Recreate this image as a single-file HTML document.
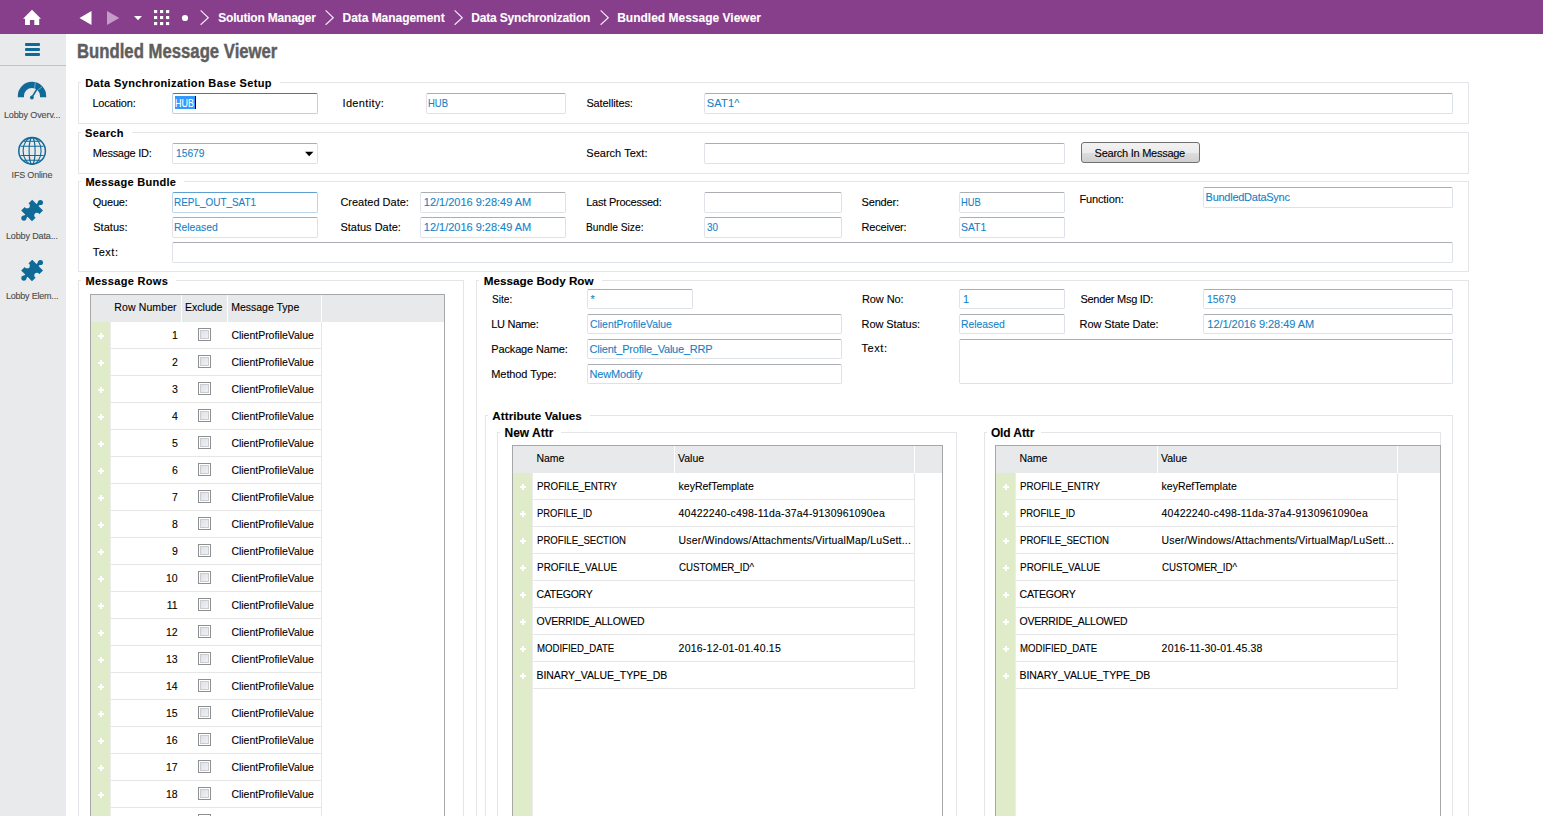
<!DOCTYPE html>
<html><head><meta charset="utf-8"><title>Bundled Message Viewer</title>
<style>
html,body{margin:0;padding:0;width:1543px;height:816px;overflow:hidden;background:#fff;font-family:"Liberation Sans",sans-serif}
.b,.t{position:absolute;box-sizing:content-box}
.t{white-space:pre;-webkit-text-stroke:0.1px currentColor}
.cb{width:11px;height:11px;border:1px solid #8e8f8f;background:linear-gradient(135deg,#d9dce2,#f6f6f7);box-shadow:inset 0 0 0 1px #fff,inset 0 0 0 2px #c9ccd3}
</style></head><body>
<div class="b" style="left:0px;top:0px;width:1543px;height:34px;background:#873e8b"></div>
<svg class="b" style="left:0;top:0" width="240" height="34" viewBox="0 0 240 34">
<path d="M32 9.8 L41 18.8 L39.2 18.8 L39.2 25 L34.3 25 L34.3 20 L29.9 20 L29.9 25 L25 25 L25 18.8 L23 18.8 Z" fill="#fff"/>
<path d="M79.5 18 L91.5 11 L91.5 25 Z" fill="#fff"/>
<path d="M107 11 L119.3 18 L107 25 Z" fill="#c59cc7"/>
<path d="M134 16 L142 16 L138 20.3 Z" fill="#fff"/>
<g fill="#fff">
<rect x="154" y="10" width="3.2" height="3.1"/><rect x="160" y="10" width="3.2" height="3.1"/><rect x="166" y="10" width="3.2" height="3.1"/>
<rect x="154" y="16" width="3.2" height="3.1"/><rect x="160" y="16" width="3.2" height="3.1"/><rect x="166" y="16" width="3.2" height="3.1"/>
<rect x="154" y="22" width="3.2" height="3.1"/><rect x="160" y="22" width="3.2" height="3.1"/><rect x="166" y="22" width="3.2" height="3.1"/>
</g>
<circle cx="185" cy="18" r="3.1" fill="#fff"/>
<path d="M200.6 10.4 L208.3 17.7 L200.6 24.8" fill="none" stroke="#f0e6f0" stroke-width="1.2"/>
</svg>
<svg class="b" style="left:324.8px;top:0" width="12" height="34" viewBox="0 0 12 34"><path d="M0.6 10.4 L8.3 17.7 L0.6 24.8" fill="none" stroke="#f0e6f0" stroke-width="1.2"/></svg>
<svg class="b" style="left:454.3px;top:0" width="12" height="34" viewBox="0 0 12 34"><path d="M0.6 10.4 L8.3 17.7 L0.6 24.8" fill="none" stroke="#f0e6f0" stroke-width="1.2"/></svg>
<svg class="b" style="left:599.8px;top:0" width="12" height="34" viewBox="0 0 12 34"><path d="M0.6 10.4 L8.3 17.7 L0.6 24.8" fill="none" stroke="#f0e6f0" stroke-width="1.2"/></svg>
<div class="t" style="left:218.20px;top:12.04px;font-size:12.00px;line-height:12.00px;color:#fff;font-weight:bold;letter-spacing:-0.197px">Solution Manager</div>
<div class="t" style="left:342.50px;top:12.04px;font-size:12.00px;line-height:12.00px;color:#fff;font-weight:bold;letter-spacing:-0.039px">Data Management</div>
<div class="t" style="left:471.30px;top:12.04px;font-size:12.00px;line-height:12.00px;color:#fff;font-weight:bold;letter-spacing:-0.187px">Data Synchronization</div>
<div class="t" style="left:617.20px;top:12.04px;font-size:12.00px;line-height:12.00px;color:#fff;font-weight:bold">Bundled Message Viewer</div>
<div class="b" style="left:0px;top:34px;width:66px;height:782px;background:#e9eaec"></div>
<div class="b" style="left:25px;top:43px;width:15px;height:3px;background:#0f6a98;border-radius:1px"></div>
<div class="b" style="left:25px;top:48px;width:15px;height:3px;background:#0f6a98;border-radius:1px"></div>
<div class="b" style="left:25px;top:53px;width:15px;height:3px;background:#0f6a98;border-radius:1px"></div>
<div class="b" style="left:0px;top:65px;width:66px;height:1px;background:#c2c3c5"></div>
<svg class="b" style="left:0;top:70" width="66" height="40" viewBox="0 70 66 40">
<path d="M17.8 97.2 L17.8 96 A14.2 14.2 0 0 1 46.2 96 L46.2 97.2 L40 97.2 L40 96 A8 8 0 0 0 24 96 L24 97.2 Z" fill="#0f6a98"/>
<path d="M35.4 82 L34.6 88" stroke="#7fb0cb" stroke-width="0.9"/>
<path d="M42 86.8 L38.3 89.8" stroke="#7fb0cb" stroke-width="0.9"/>
<path d="M31.9 97.4 L38.5 86.5" stroke="#0f6a98" stroke-width="1.6"/>
<circle cx="31.9" cy="97.5" r="1.9" fill="#0f6a98"/>
</svg>
<div class="t" style="left:3.90px;top:111.28px;font-size:9.00px;line-height:9.00px;color:#4a4a4a;letter-spacing:-0.104px">Lobby Overv...</div>
<svg class="b" style="left:0;top:130" width="66" height="40" viewBox="0 130 66 40">
<g fill="none" stroke="#0f6a98" stroke-width="1.1">
<circle cx="32.1" cy="150.9" r="13.3" stroke-width="1.5"/>
<ellipse cx="32.1" cy="150.9" rx="3" ry="13.3"/>
<ellipse cx="32.1" cy="150.9" rx="9" ry="13.3"/>
<path d="M20.5 146.2 L43.7 146.2 M20.5 155.5 L43.7 155.5 M23.5 141.2 L40.7 141.2 M23.5 160.3 L40.7 160.3"/>
</g></svg>
<div class="t" style="left:11.60px;top:171.28px;font-size:9.00px;line-height:9.00px;color:#4a4a4a;letter-spacing:-0.189px">IFS Online</div>
<svg class="b" style="left:0;top:195px" width="66" height="30" viewBox="0 195 66 30">
<path d="M32.2 199.8 L43 210.4 L32 221.2 L21.2 210.4 Z" fill="#0f6a98"/>
<circle cx="40.4" cy="202.5" r="2.6" fill="#0f6a98"/>
<path d="M36.5 206 L39.5 203.2" stroke="#0f6a98" stroke-width="3"/>
<circle cx="23.9" cy="218.1" r="2.6" fill="#0f6a98"/>
<path d="M27.5 214.6 L24.7 217.4" stroke="#0f6a98" stroke-width="3"/>
<circle cx="27.2" cy="205.7" r="2.6" fill="#e9eaec"/>
<circle cx="36.9" cy="215.3" r="2.6" fill="#e9eaec"/>
</svg>
<div class="t" style="left:5.90px;top:231.88px;font-size:9.00px;line-height:9.00px;color:#4a4a4a;letter-spacing:-0.125px">Lobby Data...</div>
<svg class="b" style="left:0;top:255px" width="66" height="30" viewBox="0 195 66 30">
<path d="M32.2 199.8 L43 210.4 L32 221.2 L21.2 210.4 Z" fill="#0f6a98"/>
<circle cx="40.4" cy="202.5" r="2.6" fill="#0f6a98"/>
<path d="M36.5 206 L39.5 203.2" stroke="#0f6a98" stroke-width="3"/>
<circle cx="23.9" cy="218.1" r="2.6" fill="#0f6a98"/>
<path d="M27.5 214.6 L24.7 217.4" stroke="#0f6a98" stroke-width="3"/>
<circle cx="27.2" cy="205.7" r="2.6" fill="#e9eaec"/>
<circle cx="36.9" cy="215.3" r="2.6" fill="#e9eaec"/>
</svg>
<div class="t" style="left:5.90px;top:291.88px;font-size:9.00px;line-height:9.00px;color:#4a4a4a;letter-spacing:-0.208px">Lobby Elem...</div>
<div class="t" style="left:77.40px;top:41.17px;font-size:20.00px;line-height:20.00px;color:#5e5e5e;transform-origin:0.00px 0;transform:scaleX(0.8359);font-weight:bold;-webkit-text-stroke:0.45px #5e5e5e">Bundled Message Viewer</div>
<div class="b" style="left:78px;top:82px;width:1px;height:42px;background:#e3e5e8"></div>
<div class="b" style="left:1468px;top:82px;width:1px;height:42px;background:#e3e5e8"></div>
<div class="b" style="left:78px;top:123px;width:1391px;height:1px;background:#e3e5e8"></div>
<div class="b" style="left:78px;top:82px;width:3px;height:1px;background:#e3e5e8"></div>
<div class="b" style="left:280px;top:82px;width:1189px;height:1px;background:#e3e5e8"></div>
<div class="t" style="left:85.30px;top:77.59px;font-size:11.00px;line-height:11.00px;color:#000;font-weight:bold;letter-spacing:0.360px">Data Synchronization Base Setup</div>
<div class="t" style="left:92.40px;top:97.89px;font-size:11.00px;line-height:11.00px;color:#000;letter-spacing:-0.169px">Location:</div>
<div class="b" style="left:172px;top:93px;width:144px;height:19px;border:1px solid #b7d2ea;border-top-color:#3d7bad;background:#fff;border-radius:2px"></div>
<div class="b" style="left:175px;top:96px;width:20px;height:13px;background:#3399ff"></div>
<div class="t" style="left:175.20px;top:97.89px;font-size:11.00px;line-height:11.00px;color:#fff;transform-origin:0.00px 0;transform:scaleX(0.8172)">HUB</div>
<div class="b" style="left:195px;top:96px;width:1px;height:13px;background:#000"></div>
<div class="t" style="left:342.50px;top:97.89px;font-size:11.00px;line-height:11.00px;color:#000;letter-spacing:0.350px">Identity:</div>
<div class="b" style="left:426px;top:93px;width:138px;height:19px;border:1px solid #dde1e8;border-top-color:#abadb3;border-left-color:#e2e3ea;background:#fff;border-radius:2px"></div>
<div class="t" style="left:428.40px;top:97.69px;font-size:11.00px;line-height:11.00px;color:#1583c6;transform-origin:0.00px 0;transform:scaleX(0.8602)">HUB</div>
<div class="t" style="left:586.40px;top:97.89px;font-size:11.00px;line-height:11.00px;color:#000;letter-spacing:-0.115px">Satellites:</div>
<div class="b" style="left:704px;top:93px;width:747px;height:19px;border:1px solid #dde1e8;border-top-color:#abadb3;border-left-color:#e2e3ea;background:#fff;border-radius:2px"></div>
<div class="t" style="left:706.70px;top:97.69px;font-size:11.00px;line-height:11.00px;color:#1583c6;letter-spacing:0.225px">SAT1^</div>
<div class="b" style="left:78px;top:132px;width:1px;height:42px;background:#e3e5e8"></div>
<div class="b" style="left:1468px;top:132px;width:1px;height:42px;background:#e3e5e8"></div>
<div class="b" style="left:78px;top:173px;width:1391px;height:1px;background:#e3e5e8"></div>
<div class="b" style="left:78px;top:132px;width:3px;height:1px;background:#e3e5e8"></div>
<div class="b" style="left:132px;top:132px;width:1337px;height:1px;background:#e3e5e8"></div>
<div class="t" style="left:85.10px;top:128.29px;font-size:11.00px;line-height:11.00px;color:#000;font-weight:bold;letter-spacing:0.330px">Search</div>
<div class="t" style="left:92.70px;top:147.69px;font-size:11.00px;line-height:11.00px;color:#000;letter-spacing:-0.275px">Message ID:</div>
<div class="b" style="left:172px;top:143px;width:144px;height:19px;border:1px solid #dde1e8;border-top-color:#abadb3;border-left-color:#e2e3ea;background:#fff;border-radius:2px"></div>
<div class="t" style="left:176.00px;top:147.69px;font-size:11.00px;line-height:11.00px;color:#1583c6;transform-origin:0.00px 0;transform:scaleX(0.9311)">15679</div>
<svg class="b" style="left:300px;top:146px" width="18" height="14" viewBox="300 146 18 14"><path d="M305 151.7 L313.4 151.7 L309.2 156.3 Z" fill="#000"/></svg>
<div class="t" style="left:586.30px;top:147.69px;font-size:11.00px;line-height:11.00px;color:#000;letter-spacing:0.018px">Search Text:</div>
<div class="b" style="left:704px;top:143px;width:359px;height:19px;border:1px solid #dde1e8;border-top-color:#abadb3;border-left-color:#e2e3ea;background:#fff;border-radius:2px"></div>
<div class="b" style="left:1081px;top:142px;width:117px;height:19px;border:1px solid #707070;border-radius:3px;background:linear-gradient(#f2f2f2 0%,#ebebeb 50%,#dddddd 51%,#cfcfcf 100%)"></div>
<div class="t" style="left:1094.60px;top:147.69px;font-size:11.00px;line-height:11.00px;color:#000;letter-spacing:-0.259px">Search In Message</div>
<div class="b" style="left:78px;top:181px;width:1px;height:91px;background:#e3e5e8"></div>
<div class="b" style="left:1468px;top:181px;width:1px;height:91px;background:#e3e5e8"></div>
<div class="b" style="left:78px;top:271px;width:1391px;height:1px;background:#e3e5e8"></div>
<div class="b" style="left:78px;top:181px;width:3px;height:1px;background:#e3e5e8"></div>
<div class="b" style="left:184px;top:181px;width:1285px;height:1px;background:#e3e5e8"></div>
<div class="t" style="left:85.40px;top:176.69px;font-size:11.00px;line-height:11.00px;color:#000;font-weight:bold;letter-spacing:0.281px">Message Bundle</div>
<div class="t" style="left:92.70px;top:196.89px;font-size:11.00px;line-height:11.00px;color:#000;letter-spacing:-0.200px">Queue:</div>
<div class="b" style="left:172px;top:192px;width:144px;height:19px;border:1px solid #b9d6ee;border-top-color:#5fa0d2;background:#fff;border-radius:2px"></div>
<div class="t" style="left:174.40px;top:196.69px;font-size:11.00px;line-height:11.00px;color:#1583c6;transform-origin:0.00px 0;transform:scaleX(0.9033)">REPL_OUT_SAT1</div>
<div class="t" style="left:93.20px;top:221.69px;font-size:11.00px;line-height:11.00px;color:#000;letter-spacing:0.042px">Status:</div>
<div class="b" style="left:172px;top:217px;width:144px;height:19px;border:1px solid #dde1e8;border-top-color:#abadb3;border-left-color:#e2e3ea;background:#fff;border-radius:2px"></div>
<div class="t" style="left:174.40px;top:221.69px;font-size:11.00px;line-height:11.00px;color:#1583c6;transform-origin:0.00px 0;transform:scaleX(0.9419)">Released</div>
<div class="t" style="left:92.70px;top:246.69px;font-size:11.00px;line-height:11.00px;color:#000;letter-spacing:0.513px">Text:</div>
<div class="b" style="left:172px;top:242px;width:1279px;height:19px;border:1px solid #dde1e8;border-top-color:#abadb3;border-left-color:#e2e3ea;background:#fff;border-radius:2px"></div>
<div class="t" style="left:340.40px;top:196.89px;font-size:11.00px;line-height:11.00px;color:#000">Created Date:</div>
<div class="b" style="left:420px;top:192px;width:144px;height:19px;border:1px solid #dde1e8;border-top-color:#abadb3;border-left-color:#e2e3ea;background:#fff;border-radius:2px"></div>
<div class="t" style="left:423.80px;top:196.69px;font-size:11.00px;line-height:11.00px;color:#1583c6;letter-spacing:-0.013px">12/1/2016 9:28:49 AM</div>
<div class="t" style="left:340.40px;top:221.69px;font-size:11.00px;line-height:11.00px;color:#000">Status Date:</div>
<div class="b" style="left:420px;top:217px;width:144px;height:19px;border:1px solid #dde1e8;border-top-color:#abadb3;border-left-color:#e2e3ea;background:#fff;border-radius:2px"></div>
<div class="t" style="left:423.80px;top:221.69px;font-size:11.00px;line-height:11.00px;color:#1583c6;letter-spacing:-0.013px">12/1/2016 9:28:49 AM</div>
<div class="t" style="left:586.20px;top:196.89px;font-size:11.00px;line-height:11.00px;color:#000;letter-spacing:-0.232px">Last Processed:</div>
<div class="b" style="left:704px;top:192px;width:136px;height:19px;border:1px solid #dde1e8;border-top-color:#abadb3;border-left-color:#e2e3ea;background:#fff;border-radius:2px"></div>
<div class="t" style="left:586.20px;top:221.69px;font-size:11.00px;line-height:11.00px;color:#000;transform-origin:0.00px 0;transform:scaleX(0.9312)">Bundle Size:</div>
<div class="b" style="left:704px;top:217px;width:136px;height:19px;border:1px solid #dde1e8;border-top-color:#abadb3;border-left-color:#e2e3ea;background:#fff;border-radius:2px"></div>
<div class="t" style="left:707.20px;top:221.69px;font-size:11.00px;line-height:11.00px;color:#1583c6;transform-origin:0.00px 0;transform:scaleX(0.8980)">30</div>
<div class="t" style="left:861.50px;top:196.79px;font-size:11.00px;line-height:11.00px;color:#000;letter-spacing:-0.150px">Sender:</div>
<div class="b" style="left:959px;top:192px;width:104px;height:19px;border:1px solid #dde1e8;border-top-color:#abadb3;border-left-color:#e2e3ea;background:#fff;border-radius:2px"></div>
<div class="t" style="left:961.40px;top:196.69px;font-size:11.00px;line-height:11.00px;color:#1583c6;transform-origin:0.00px 0;transform:scaleX(0.8473)">HUB</div>
<div class="t" style="left:861.50px;top:221.69px;font-size:11.00px;line-height:11.00px;color:#000;letter-spacing:-0.162px">Receiver:</div>
<div class="b" style="left:959px;top:217px;width:104px;height:19px;border:1px solid #dde1e8;border-top-color:#abadb3;border-left-color:#e2e3ea;background:#fff;border-radius:2px"></div>
<div class="t" style="left:961.40px;top:221.69px;font-size:11.00px;line-height:11.00px;color:#1583c6;transform-origin:0.00px 0;transform:scaleX(0.9458)">SAT1</div>
<div class="t" style="left:1079.40px;top:193.79px;font-size:11.00px;line-height:11.00px;color:#000;letter-spacing:-0.119px">Function:</div>
<div class="b" style="left:1203px;top:187px;width:248px;height:19px;border:1px solid #dde1e8;border-top-color:#abadb3;border-left-color:#e2e3ea;background:#fff;border-radius:2px"></div>
<div class="t" style="left:1205.60px;top:191.59px;font-size:11.00px;line-height:11.00px;color:#1583c6;letter-spacing:-0.264px">BundledDataSync</div>
<div class="b" style="left:78px;top:280px;width:1px;height:542px;background:#e3e5e8"></div>
<div class="b" style="left:463px;top:280px;width:1px;height:542px;background:#e3e5e8"></div>
<div class="b" style="left:78px;top:280px;width:3px;height:1px;background:#e3e5e8"></div>
<div class="b" style="left:176px;top:280px;width:288px;height:1px;background:#e3e5e8"></div>
<div class="t" style="left:85.40px;top:275.89px;font-size:11.00px;line-height:11.00px;color:#000;font-weight:bold;letter-spacing:0.323px">Message Rows</div>
<div class="b" style="left:90px;top:294px;width:353px;height:527px;border:1px solid #a7a7a7;border-bottom:none;background:#fff"></div>
<div class="b" style="left:91px;top:295px;width:353px;height:27px;background:#e8e9eb"></div>
<div class="b" style="left:181px;top:295px;width:1px;height:27px;background:#fff"></div>
<div class="b" style="left:227px;top:295px;width:1px;height:27px;background:#fff"></div>
<div class="b" style="left:321px;top:295px;width:1px;height:27px;background:#fff"></div>
<div class="t" style="left:114.30px;top:301.91px;font-size:10.50px;line-height:10.50px;color:#000;letter-spacing:0.117px">Row Number</div>
<div class="t" style="left:185.10px;top:301.91px;font-size:10.50px;line-height:10.50px;color:#000">Exclude</div>
<div class="t" style="left:231.20px;top:301.91px;font-size:10.50px;line-height:10.50px;color:#000">Message Type</div>
<div class="b" style="left:91px;top:322px;width:19px;height:494px;background:#e0ebc9"></div>
<div class="b" style="left:110px;top:322px;width:1px;height:494px;background:#ececec"></div>
<div class="b" style="left:321px;top:322px;width:1px;height:494px;background:#e6e6e6"></div>
<div class="b" style="left:111px;top:348px;width:210px;height:1px;background:#e6e6e6"></div>
<div class="b" style="left:98px;top:335px;width:6px;height:2px;background:#fff"></div>
<div class="b" style="left:100px;top:333px;width:2px;height:6px;background:#fff"></div>
<div class="t" style="left:171.95px;top:330.11px;font-size:10.50px;line-height:10.50px;color:#000">1</div>
<div class="b cb" style="left:198px;top:328px"></div>
<div class="t" style="left:231.40px;top:330.11px;font-size:10.50px;line-height:10.50px;color:#000;letter-spacing:-0.015px">ClientProfileValue</div>
<div class="b" style="left:111px;top:375px;width:210px;height:1px;background:#e6e6e6"></div>
<div class="b" style="left:98px;top:362px;width:6px;height:2px;background:#fff"></div>
<div class="b" style="left:100px;top:360px;width:2px;height:6px;background:#fff"></div>
<div class="t" style="left:171.95px;top:357.11px;font-size:10.50px;line-height:10.50px;color:#000">2</div>
<div class="b cb" style="left:198px;top:355px"></div>
<div class="t" style="left:231.40px;top:357.11px;font-size:10.50px;line-height:10.50px;color:#000;letter-spacing:-0.015px">ClientProfileValue</div>
<div class="b" style="left:111px;top:402px;width:210px;height:1px;background:#e6e6e6"></div>
<div class="b" style="left:98px;top:389px;width:6px;height:2px;background:#fff"></div>
<div class="b" style="left:100px;top:387px;width:2px;height:6px;background:#fff"></div>
<div class="t" style="left:171.95px;top:384.11px;font-size:10.50px;line-height:10.50px;color:#000">3</div>
<div class="b cb" style="left:198px;top:382px"></div>
<div class="t" style="left:231.40px;top:384.11px;font-size:10.50px;line-height:10.50px;color:#000;letter-spacing:-0.015px">ClientProfileValue</div>
<div class="b" style="left:111px;top:429px;width:210px;height:1px;background:#e6e6e6"></div>
<div class="b" style="left:98px;top:416px;width:6px;height:2px;background:#fff"></div>
<div class="b" style="left:100px;top:414px;width:2px;height:6px;background:#fff"></div>
<div class="t" style="left:171.95px;top:411.11px;font-size:10.50px;line-height:10.50px;color:#000">4</div>
<div class="b cb" style="left:198px;top:409px"></div>
<div class="t" style="left:231.40px;top:411.11px;font-size:10.50px;line-height:10.50px;color:#000;letter-spacing:-0.015px">ClientProfileValue</div>
<div class="b" style="left:111px;top:456px;width:210px;height:1px;background:#e6e6e6"></div>
<div class="b" style="left:98px;top:443px;width:6px;height:2px;background:#fff"></div>
<div class="b" style="left:100px;top:441px;width:2px;height:6px;background:#fff"></div>
<div class="t" style="left:171.95px;top:438.11px;font-size:10.50px;line-height:10.50px;color:#000">5</div>
<div class="b cb" style="left:198px;top:436px"></div>
<div class="t" style="left:231.40px;top:438.11px;font-size:10.50px;line-height:10.50px;color:#000;letter-spacing:-0.015px">ClientProfileValue</div>
<div class="b" style="left:111px;top:483px;width:210px;height:1px;background:#e6e6e6"></div>
<div class="b" style="left:98px;top:470px;width:6px;height:2px;background:#fff"></div>
<div class="b" style="left:100px;top:468px;width:2px;height:6px;background:#fff"></div>
<div class="t" style="left:171.95px;top:465.11px;font-size:10.50px;line-height:10.50px;color:#000">6</div>
<div class="b cb" style="left:198px;top:463px"></div>
<div class="t" style="left:231.40px;top:465.11px;font-size:10.50px;line-height:10.50px;color:#000;letter-spacing:-0.015px">ClientProfileValue</div>
<div class="b" style="left:111px;top:510px;width:210px;height:1px;background:#e6e6e6"></div>
<div class="b" style="left:98px;top:497px;width:6px;height:2px;background:#fff"></div>
<div class="b" style="left:100px;top:495px;width:2px;height:6px;background:#fff"></div>
<div class="t" style="left:171.95px;top:492.11px;font-size:10.50px;line-height:10.50px;color:#000">7</div>
<div class="b cb" style="left:198px;top:490px"></div>
<div class="t" style="left:231.40px;top:492.11px;font-size:10.50px;line-height:10.50px;color:#000;letter-spacing:-0.015px">ClientProfileValue</div>
<div class="b" style="left:111px;top:537px;width:210px;height:1px;background:#e6e6e6"></div>
<div class="b" style="left:98px;top:524px;width:6px;height:2px;background:#fff"></div>
<div class="b" style="left:100px;top:522px;width:2px;height:6px;background:#fff"></div>
<div class="t" style="left:171.95px;top:519.11px;font-size:10.50px;line-height:10.50px;color:#000">8</div>
<div class="b cb" style="left:198px;top:517px"></div>
<div class="t" style="left:231.40px;top:519.11px;font-size:10.50px;line-height:10.50px;color:#000;letter-spacing:-0.015px">ClientProfileValue</div>
<div class="b" style="left:111px;top:564px;width:210px;height:1px;background:#e6e6e6"></div>
<div class="b" style="left:98px;top:551px;width:6px;height:2px;background:#fff"></div>
<div class="b" style="left:100px;top:549px;width:2px;height:6px;background:#fff"></div>
<div class="t" style="left:171.95px;top:546.11px;font-size:10.50px;line-height:10.50px;color:#000">9</div>
<div class="b cb" style="left:198px;top:544px"></div>
<div class="t" style="left:231.40px;top:546.11px;font-size:10.50px;line-height:10.50px;color:#000;letter-spacing:-0.015px">ClientProfileValue</div>
<div class="b" style="left:111px;top:591px;width:210px;height:1px;background:#e6e6e6"></div>
<div class="b" style="left:98px;top:578px;width:6px;height:2px;background:#fff"></div>
<div class="b" style="left:100px;top:576px;width:2px;height:6px;background:#fff"></div>
<div class="t" style="left:165.95px;top:573.11px;font-size:10.50px;line-height:10.50px;color:#000">10</div>
<div class="b cb" style="left:198px;top:571px"></div>
<div class="t" style="left:231.40px;top:573.11px;font-size:10.50px;line-height:10.50px;color:#000;letter-spacing:-0.015px">ClientProfileValue</div>
<div class="b" style="left:111px;top:618px;width:210px;height:1px;background:#e6e6e6"></div>
<div class="b" style="left:98px;top:605px;width:6px;height:2px;background:#fff"></div>
<div class="b" style="left:100px;top:603px;width:2px;height:6px;background:#fff"></div>
<div class="t" style="left:166.70px;top:600.11px;font-size:10.50px;line-height:10.50px;color:#000">11</div>
<div class="b cb" style="left:198px;top:598px"></div>
<div class="t" style="left:231.40px;top:600.11px;font-size:10.50px;line-height:10.50px;color:#000;letter-spacing:-0.015px">ClientProfileValue</div>
<div class="b" style="left:111px;top:645px;width:210px;height:1px;background:#e6e6e6"></div>
<div class="b" style="left:98px;top:632px;width:6px;height:2px;background:#fff"></div>
<div class="b" style="left:100px;top:630px;width:2px;height:6px;background:#fff"></div>
<div class="t" style="left:165.95px;top:627.11px;font-size:10.50px;line-height:10.50px;color:#000">12</div>
<div class="b cb" style="left:198px;top:625px"></div>
<div class="t" style="left:231.40px;top:627.11px;font-size:10.50px;line-height:10.50px;color:#000;letter-spacing:-0.015px">ClientProfileValue</div>
<div class="b" style="left:111px;top:672px;width:210px;height:1px;background:#e6e6e6"></div>
<div class="b" style="left:98px;top:659px;width:6px;height:2px;background:#fff"></div>
<div class="b" style="left:100px;top:657px;width:2px;height:6px;background:#fff"></div>
<div class="t" style="left:165.95px;top:654.11px;font-size:10.50px;line-height:10.50px;color:#000">13</div>
<div class="b cb" style="left:198px;top:652px"></div>
<div class="t" style="left:231.40px;top:654.11px;font-size:10.50px;line-height:10.50px;color:#000;letter-spacing:-0.015px">ClientProfileValue</div>
<div class="b" style="left:111px;top:699px;width:210px;height:1px;background:#e6e6e6"></div>
<div class="b" style="left:98px;top:686px;width:6px;height:2px;background:#fff"></div>
<div class="b" style="left:100px;top:684px;width:2px;height:6px;background:#fff"></div>
<div class="t" style="left:165.95px;top:681.11px;font-size:10.50px;line-height:10.50px;color:#000">14</div>
<div class="b cb" style="left:198px;top:679px"></div>
<div class="t" style="left:231.40px;top:681.11px;font-size:10.50px;line-height:10.50px;color:#000;letter-spacing:-0.015px">ClientProfileValue</div>
<div class="b" style="left:111px;top:726px;width:210px;height:1px;background:#e6e6e6"></div>
<div class="b" style="left:98px;top:713px;width:6px;height:2px;background:#fff"></div>
<div class="b" style="left:100px;top:711px;width:2px;height:6px;background:#fff"></div>
<div class="t" style="left:165.95px;top:708.11px;font-size:10.50px;line-height:10.50px;color:#000">15</div>
<div class="b cb" style="left:198px;top:706px"></div>
<div class="t" style="left:231.40px;top:708.11px;font-size:10.50px;line-height:10.50px;color:#000;letter-spacing:-0.015px">ClientProfileValue</div>
<div class="b" style="left:111px;top:753px;width:210px;height:1px;background:#e6e6e6"></div>
<div class="b" style="left:98px;top:740px;width:6px;height:2px;background:#fff"></div>
<div class="b" style="left:100px;top:738px;width:2px;height:6px;background:#fff"></div>
<div class="t" style="left:165.95px;top:735.11px;font-size:10.50px;line-height:10.50px;color:#000">16</div>
<div class="b cb" style="left:198px;top:733px"></div>
<div class="t" style="left:231.40px;top:735.11px;font-size:10.50px;line-height:10.50px;color:#000;letter-spacing:-0.015px">ClientProfileValue</div>
<div class="b" style="left:111px;top:780px;width:210px;height:1px;background:#e6e6e6"></div>
<div class="b" style="left:98px;top:767px;width:6px;height:2px;background:#fff"></div>
<div class="b" style="left:100px;top:765px;width:2px;height:6px;background:#fff"></div>
<div class="t" style="left:165.95px;top:762.11px;font-size:10.50px;line-height:10.50px;color:#000">17</div>
<div class="b cb" style="left:198px;top:760px"></div>
<div class="t" style="left:231.40px;top:762.11px;font-size:10.50px;line-height:10.50px;color:#000;letter-spacing:-0.015px">ClientProfileValue</div>
<div class="b" style="left:111px;top:807px;width:210px;height:1px;background:#e6e6e6"></div>
<div class="b" style="left:98px;top:794px;width:6px;height:2px;background:#fff"></div>
<div class="b" style="left:100px;top:792px;width:2px;height:6px;background:#fff"></div>
<div class="t" style="left:165.95px;top:789.11px;font-size:10.50px;line-height:10.50px;color:#000">18</div>
<div class="b cb" style="left:198px;top:787px"></div>
<div class="t" style="left:231.40px;top:789.11px;font-size:10.50px;line-height:10.50px;color:#000;letter-spacing:-0.015px">ClientProfileValue</div>
<div class="b" style="left:111px;top:834px;width:210px;height:1px;background:#e6e6e6"></div>
<div class="b" style="left:98px;top:821px;width:6px;height:2px;background:#fff"></div>
<div class="b" style="left:100px;top:819px;width:2px;height:6px;background:#fff"></div>
<div class="t" style="left:165.95px;top:816.11px;font-size:10.50px;line-height:10.50px;color:#000">19</div>
<div class="b cb" style="left:198px;top:814px"></div>
<div class="t" style="left:231.40px;top:816.11px;font-size:10.50px;line-height:10.50px;color:#000;letter-spacing:-0.015px">ClientProfileValue</div>
<div class="b" style="left:476px;top:280px;width:1px;height:542px;background:#e3e5e8"></div>
<div class="b" style="left:1468px;top:280px;width:1px;height:542px;background:#e3e5e8"></div>
<div class="b" style="left:476px;top:280px;width:3px;height:1px;background:#e3e5e8"></div>
<div class="b" style="left:602px;top:280px;width:867px;height:1px;background:#e3e5e8"></div>
<div class="t" style="left:483.80px;top:275.30px;font-size:11.70px;line-height:11.70px;color:#000;font-weight:bold">Message Body Row</div>
<div class="t" style="left:491.50px;top:293.69px;font-size:11.00px;line-height:11.00px;color:#000;transform-origin:0.00px 0;transform:scaleX(0.9182)">Site:</div>
<div class="b" style="left:587px;top:289px;width:104px;height:18px;border:1px solid #dde1e8;border-top-color:#abadb3;border-left-color:#e2e3ea;background:#fff;border-radius:2px"></div>
<div class="t" style="left:590.40px;top:293.69px;font-size:11.00px;line-height:11.00px;color:#1583c6">*</div>
<div class="t" style="left:491.30px;top:318.79px;font-size:11.00px;line-height:11.00px;color:#000;letter-spacing:-0.300px">LU Name:</div>
<div class="b" style="left:587px;top:314px;width:253px;height:18px;border:1px solid #dde1e8;border-top-color:#abadb3;border-left-color:#e2e3ea;background:#fff;border-radius:2px"></div>
<div class="t" style="left:589.60px;top:318.79px;font-size:11.00px;line-height:11.00px;color:#1583c6;transform-origin:0.00px 0;transform:scaleX(0.9445)">ClientProfileValue</div>
<div class="t" style="left:491.30px;top:343.69px;font-size:11.00px;line-height:11.00px;color:#000;letter-spacing:-0.154px">Package Name:</div>
<div class="b" style="left:587px;top:339px;width:253px;height:18px;border:1px solid #dde1e8;border-top-color:#abadb3;border-left-color:#e2e3ea;background:#fff;border-radius:2px"></div>
<div class="t" style="left:589.60px;top:343.69px;font-size:11.00px;line-height:11.00px;color:#1583c6;letter-spacing:-0.228px">Client_Profile_Value_RRP</div>
<div class="t" style="left:491.30px;top:368.69px;font-size:11.00px;line-height:11.00px;color:#000;letter-spacing:-0.100px">Method Type:</div>
<div class="b" style="left:587px;top:364px;width:253px;height:18px;border:1px solid #dde1e8;border-top-color:#abadb3;border-left-color:#e2e3ea;background:#fff;border-radius:2px"></div>
<div class="t" style="left:589.60px;top:368.69px;font-size:11.00px;line-height:11.00px;color:#1583c6;letter-spacing:-0.188px">NewModify</div>
<div class="t" style="left:862.00px;top:293.69px;font-size:11.00px;line-height:11.00px;color:#000;letter-spacing:-0.108px">Row No:</div>
<div class="b" style="left:959px;top:289px;width:104px;height:18px;border:1px solid #dde1e8;border-top-color:#abadb3;border-left-color:#e2e3ea;background:#fff;border-radius:2px"></div>
<div class="t" style="left:963.10px;top:293.69px;font-size:11.00px;line-height:11.00px;color:#1583c6">1</div>
<div class="t" style="left:861.50px;top:318.79px;font-size:11.00px;line-height:11.00px;color:#000;letter-spacing:-0.065px">Row Status:</div>
<div class="b" style="left:959px;top:314px;width:104px;height:18px;border:1px solid #dde1e8;border-top-color:#abadb3;border-left-color:#e2e3ea;background:#fff;border-radius:2px"></div>
<div class="t" style="left:961.40px;top:318.79px;font-size:11.00px;line-height:11.00px;color:#1583c6;transform-origin:0.00px 0;transform:scaleX(0.9419)">Released</div>
<div class="t" style="left:861.50px;top:343.49px;font-size:11.00px;line-height:11.00px;color:#000;letter-spacing:0.562px">Text:</div>
<div class="b" style="left:959px;top:339px;width:492px;height:43px;border:1px solid #dde1e8;border-top-color:#abadb3;border-left-color:#e2e3ea;background:#fff;border-radius:2px"></div>
<div class="t" style="left:1080.40px;top:293.59px;font-size:11.00px;line-height:11.00px;color:#000;letter-spacing:-0.269px">Sender Msg ID:</div>
<div class="b" style="left:1203px;top:289px;width:248px;height:18px;border:1px solid #dde1e8;border-top-color:#abadb3;border-left-color:#e2e3ea;background:#fff;border-radius:2px"></div>
<div class="t" style="left:1207.30px;top:293.69px;font-size:11.00px;line-height:11.00px;color:#1583c6;transform-origin:0.00px 0;transform:scaleX(0.9410)">15679</div>
<div class="t" style="left:1079.60px;top:318.79px;font-size:11.00px;line-height:11.00px;color:#000;letter-spacing:-0.079px">Row State Date:</div>
<div class="b" style="left:1203px;top:314px;width:248px;height:18px;border:1px solid #dde1e8;border-top-color:#abadb3;border-left-color:#e2e3ea;background:#fff;border-radius:2px"></div>
<div class="t" style="left:1207.30px;top:318.79px;font-size:11.00px;line-height:11.00px;color:#1583c6;letter-spacing:-0.039px">12/1/2016 9:28:49 AM</div>
<div class="b" style="left:485px;top:415px;width:1px;height:407px;background:#e3e5e8"></div>
<div class="b" style="left:1452px;top:415px;width:1px;height:407px;background:#e3e5e8"></div>
<div class="b" style="left:485px;top:415px;width:3px;height:1px;background:#e3e5e8"></div>
<div class="b" style="left:590px;top:415px;width:863px;height:1px;background:#e3e5e8"></div>
<div class="t" style="left:492.30px;top:409.70px;font-size:11.70px;line-height:11.70px;color:#000;font-weight:bold;letter-spacing:0.040px">Attribute Values</div>
<div class="b" style="left:497px;top:432px;width:1px;height:390px;background:#e3e5e8"></div>
<div class="b" style="left:956px;top:432px;width:1px;height:390px;background:#e3e5e8"></div>
<div class="b" style="left:497px;top:432px;width:3px;height:1px;background:#e3e5e8"></div>
<div class="b" style="left:561px;top:432px;width:396px;height:1px;background:#e3e5e8"></div>
<div class="t" style="left:504.50px;top:427.04px;font-size:12.00px;line-height:12.00px;color:#000;font-weight:bold">New Attr</div>
<div class="b" style="left:984px;top:432px;width:1px;height:390px;background:#e3e5e8"></div>
<div class="b" style="left:1440px;top:432px;width:1px;height:390px;background:#e3e5e8"></div>
<div class="b" style="left:984px;top:432px;width:3px;height:1px;background:#e3e5e8"></div>
<div class="b" style="left:1041px;top:432px;width:400px;height:1px;background:#e3e5e8"></div>
<div class="t" style="left:990.90px;top:427.04px;font-size:12.00px;line-height:12.00px;color:#000;font-weight:bold;letter-spacing:-0.107px">Old Attr</div>
<div class="b" style="left:512px;top:445px;width:429px;height:376px;border:1px solid #a7a7a7;border-bottom:none;background:#fff"></div>
<div class="b" style="left:513px;top:446px;width:429px;height:27px;background:#e8e9eb"></div>
<div class="b" style="left:674px;top:446px;width:1px;height:27px;background:#fff"></div>
<div class="b" style="left:914px;top:446px;width:1px;height:27px;background:#fff"></div>
<div class="t" style="left:536.40px;top:452.61px;font-size:10.50px;line-height:10.50px;color:#000">Name</div>
<div class="t" style="left:678.00px;top:452.91px;font-size:10.50px;line-height:10.50px;color:#000">Value</div>
<div class="b" style="left:513px;top:473px;width:19px;height:343px;background:#e0ebc9"></div>
<div class="b" style="left:532px;top:473px;width:1px;height:343px;background:#ececec"></div>
<div class="b" style="left:914px;top:473px;width:1px;height:216px;background:#e6e6e6"></div>
<div class="b" style="left:533px;top:499px;width:381px;height:1px;background:#e6e6e6"></div>
<div class="b" style="left:520px;top:486px;width:6px;height:2px;background:#fff"></div>
<div class="b" style="left:522px;top:484px;width:2px;height:6px;background:#fff"></div>
<div class="t" style="left:536.60px;top:481.01px;font-size:10.50px;line-height:10.50px;color:#000;transform-origin:0.00px 0;transform:scaleX(0.9287)">PROFILE_ENTRY</div>
<div class="t" style="left:678.60px;top:481.01px;font-size:10.50px;line-height:10.50px;color:#000;letter-spacing:-0.012px">keyRefTemplate</div>
<div class="b" style="left:533px;top:526px;width:381px;height:1px;background:#e6e6e6"></div>
<div class="b" style="left:520px;top:513px;width:6px;height:2px;background:#fff"></div>
<div class="b" style="left:522px;top:511px;width:2px;height:6px;background:#fff"></div>
<div class="t" style="left:536.60px;top:508.01px;font-size:10.50px;line-height:10.50px;color:#000;transform-origin:0.00px 0;transform:scaleX(0.8996)">PROFILE_ID</div>
<div class="t" style="left:678.60px;top:508.01px;font-size:10.50px;line-height:10.50px;color:#000;letter-spacing:0.190px">40422240-c498-11da-37a4-9130961090ea</div>
<div class="b" style="left:533px;top:553px;width:381px;height:1px;background:#e6e6e6"></div>
<div class="b" style="left:520px;top:540px;width:6px;height:2px;background:#fff"></div>
<div class="b" style="left:522px;top:538px;width:2px;height:6px;background:#fff"></div>
<div class="t" style="left:536.60px;top:535.01px;font-size:10.50px;line-height:10.50px;color:#000;transform-origin:0.00px 0;transform:scaleX(0.9138)">PROFILE_SECTION</div>
<div class="t" style="left:678.60px;top:535.01px;font-size:10.50px;line-height:10.50px;color:#000;letter-spacing:0.189px">User/Windows/Attachments/VirtualMap/LuSett...</div>
<div class="b" style="left:533px;top:580px;width:381px;height:1px;background:#e6e6e6"></div>
<div class="b" style="left:520px;top:567px;width:6px;height:2px;background:#fff"></div>
<div class="b" style="left:522px;top:565px;width:2px;height:6px;background:#fff"></div>
<div class="t" style="left:536.60px;top:562.01px;font-size:10.50px;line-height:10.50px;color:#000;transform-origin:0.00px 0;transform:scaleX(0.9479)">PROFILE_VALUE</div>
<div class="t" style="left:678.60px;top:562.01px;font-size:10.50px;line-height:10.50px;color:#000;transform-origin:0.00px 0;transform:scaleX(0.9243)">CUSTOMER_ID^</div>
<div class="b" style="left:533px;top:607px;width:381px;height:1px;background:#e6e6e6"></div>
<div class="b" style="left:520px;top:594px;width:6px;height:2px;background:#fff"></div>
<div class="b" style="left:522px;top:592px;width:2px;height:6px;background:#fff"></div>
<div class="t" style="left:536.60px;top:589.01px;font-size:10.50px;line-height:10.50px;color:#000;letter-spacing:-0.271px">CATEGORY</div>
<div class="b" style="left:533px;top:634px;width:381px;height:1px;background:#e6e6e6"></div>
<div class="b" style="left:520px;top:621px;width:6px;height:2px;background:#fff"></div>
<div class="b" style="left:522px;top:619px;width:2px;height:6px;background:#fff"></div>
<div class="t" style="left:536.60px;top:616.01px;font-size:10.50px;line-height:10.50px;color:#000;letter-spacing:-0.273px">OVERRIDE_ALLOWED</div>
<div class="b" style="left:533px;top:661px;width:381px;height:1px;background:#e6e6e6"></div>
<div class="b" style="left:520px;top:648px;width:6px;height:2px;background:#fff"></div>
<div class="b" style="left:522px;top:646px;width:2px;height:6px;background:#fff"></div>
<div class="t" style="left:536.60px;top:643.01px;font-size:10.50px;line-height:10.50px;color:#000;transform-origin:0.00px 0;transform:scaleX(0.9148)">MODIFIED_DATE</div>
<div class="t" style="left:678.60px;top:643.01px;font-size:10.50px;line-height:10.50px;color:#000;letter-spacing:0.228px">2016-12-01-01.40.15</div>
<div class="b" style="left:533px;top:688px;width:381px;height:1px;background:#e6e6e6"></div>
<div class="b" style="left:520px;top:675px;width:6px;height:2px;background:#fff"></div>
<div class="b" style="left:522px;top:673px;width:2px;height:6px;background:#fff"></div>
<div class="t" style="left:536.60px;top:670.01px;font-size:10.50px;line-height:10.50px;color:#000;letter-spacing:-0.079px">BINARY_VALUE_TYPE_DB</div>
<div class="b" style="left:995px;top:445px;width:444px;height:376px;border:1px solid #a7a7a7;border-bottom:none;background:#fff"></div>
<div class="b" style="left:996px;top:446px;width:444px;height:27px;background:#e8e9eb"></div>
<div class="b" style="left:1157px;top:446px;width:1px;height:27px;background:#fff"></div>
<div class="b" style="left:1397px;top:446px;width:1px;height:27px;background:#fff"></div>
<div class="t" style="left:1019.40px;top:452.61px;font-size:10.50px;line-height:10.50px;color:#000">Name</div>
<div class="t" style="left:1161.00px;top:452.91px;font-size:10.50px;line-height:10.50px;color:#000">Value</div>
<div class="b" style="left:996px;top:473px;width:19px;height:343px;background:#e0ebc9"></div>
<div class="b" style="left:1015px;top:473px;width:1px;height:343px;background:#ececec"></div>
<div class="b" style="left:1397px;top:473px;width:1px;height:216px;background:#e6e6e6"></div>
<div class="b" style="left:1016px;top:499px;width:381px;height:1px;background:#e6e6e6"></div>
<div class="b" style="left:1003px;top:486px;width:6px;height:2px;background:#fff"></div>
<div class="b" style="left:1005px;top:484px;width:2px;height:6px;background:#fff"></div>
<div class="t" style="left:1019.60px;top:481.01px;font-size:10.50px;line-height:10.50px;color:#000;transform-origin:0.00px 0;transform:scaleX(0.9287)">PROFILE_ENTRY</div>
<div class="t" style="left:1161.60px;top:481.01px;font-size:10.50px;line-height:10.50px;color:#000;letter-spacing:-0.012px">keyRefTemplate</div>
<div class="b" style="left:1016px;top:526px;width:381px;height:1px;background:#e6e6e6"></div>
<div class="b" style="left:1003px;top:513px;width:6px;height:2px;background:#fff"></div>
<div class="b" style="left:1005px;top:511px;width:2px;height:6px;background:#fff"></div>
<div class="t" style="left:1019.60px;top:508.01px;font-size:10.50px;line-height:10.50px;color:#000;transform-origin:0.00px 0;transform:scaleX(0.8996)">PROFILE_ID</div>
<div class="t" style="left:1161.60px;top:508.01px;font-size:10.50px;line-height:10.50px;color:#000;letter-spacing:0.190px">40422240-c498-11da-37a4-9130961090ea</div>
<div class="b" style="left:1016px;top:553px;width:381px;height:1px;background:#e6e6e6"></div>
<div class="b" style="left:1003px;top:540px;width:6px;height:2px;background:#fff"></div>
<div class="b" style="left:1005px;top:538px;width:2px;height:6px;background:#fff"></div>
<div class="t" style="left:1019.60px;top:535.01px;font-size:10.50px;line-height:10.50px;color:#000;transform-origin:0.00px 0;transform:scaleX(0.9138)">PROFILE_SECTION</div>
<div class="t" style="left:1161.60px;top:535.01px;font-size:10.50px;line-height:10.50px;color:#000;letter-spacing:0.189px">User/Windows/Attachments/VirtualMap/LuSett...</div>
<div class="b" style="left:1016px;top:580px;width:381px;height:1px;background:#e6e6e6"></div>
<div class="b" style="left:1003px;top:567px;width:6px;height:2px;background:#fff"></div>
<div class="b" style="left:1005px;top:565px;width:2px;height:6px;background:#fff"></div>
<div class="t" style="left:1019.60px;top:562.01px;font-size:10.50px;line-height:10.50px;color:#000;transform-origin:0.00px 0;transform:scaleX(0.9479)">PROFILE_VALUE</div>
<div class="t" style="left:1161.60px;top:562.01px;font-size:10.50px;line-height:10.50px;color:#000;transform-origin:0.00px 0;transform:scaleX(0.9243)">CUSTOMER_ID^</div>
<div class="b" style="left:1016px;top:607px;width:381px;height:1px;background:#e6e6e6"></div>
<div class="b" style="left:1003px;top:594px;width:6px;height:2px;background:#fff"></div>
<div class="b" style="left:1005px;top:592px;width:2px;height:6px;background:#fff"></div>
<div class="t" style="left:1019.60px;top:589.01px;font-size:10.50px;line-height:10.50px;color:#000;letter-spacing:-0.271px">CATEGORY</div>
<div class="b" style="left:1016px;top:634px;width:381px;height:1px;background:#e6e6e6"></div>
<div class="b" style="left:1003px;top:621px;width:6px;height:2px;background:#fff"></div>
<div class="b" style="left:1005px;top:619px;width:2px;height:6px;background:#fff"></div>
<div class="t" style="left:1019.60px;top:616.01px;font-size:10.50px;line-height:10.50px;color:#000;letter-spacing:-0.273px">OVERRIDE_ALLOWED</div>
<div class="b" style="left:1016px;top:661px;width:381px;height:1px;background:#e6e6e6"></div>
<div class="b" style="left:1003px;top:648px;width:6px;height:2px;background:#fff"></div>
<div class="b" style="left:1005px;top:646px;width:2px;height:6px;background:#fff"></div>
<div class="t" style="left:1019.60px;top:643.01px;font-size:10.50px;line-height:10.50px;color:#000;transform-origin:0.00px 0;transform:scaleX(0.9148)">MODIFIED_DATE</div>
<div class="t" style="left:1161.60px;top:643.01px;font-size:10.50px;line-height:10.50px;color:#000;letter-spacing:0.197px">2016-11-30-01.45.38</div>
<div class="b" style="left:1016px;top:688px;width:381px;height:1px;background:#e6e6e6"></div>
<div class="b" style="left:1003px;top:675px;width:6px;height:2px;background:#fff"></div>
<div class="b" style="left:1005px;top:673px;width:2px;height:6px;background:#fff"></div>
<div class="t" style="left:1019.60px;top:670.01px;font-size:10.50px;line-height:10.50px;color:#000;letter-spacing:-0.079px">BINARY_VALUE_TYPE_DB</div>
</body></html>
